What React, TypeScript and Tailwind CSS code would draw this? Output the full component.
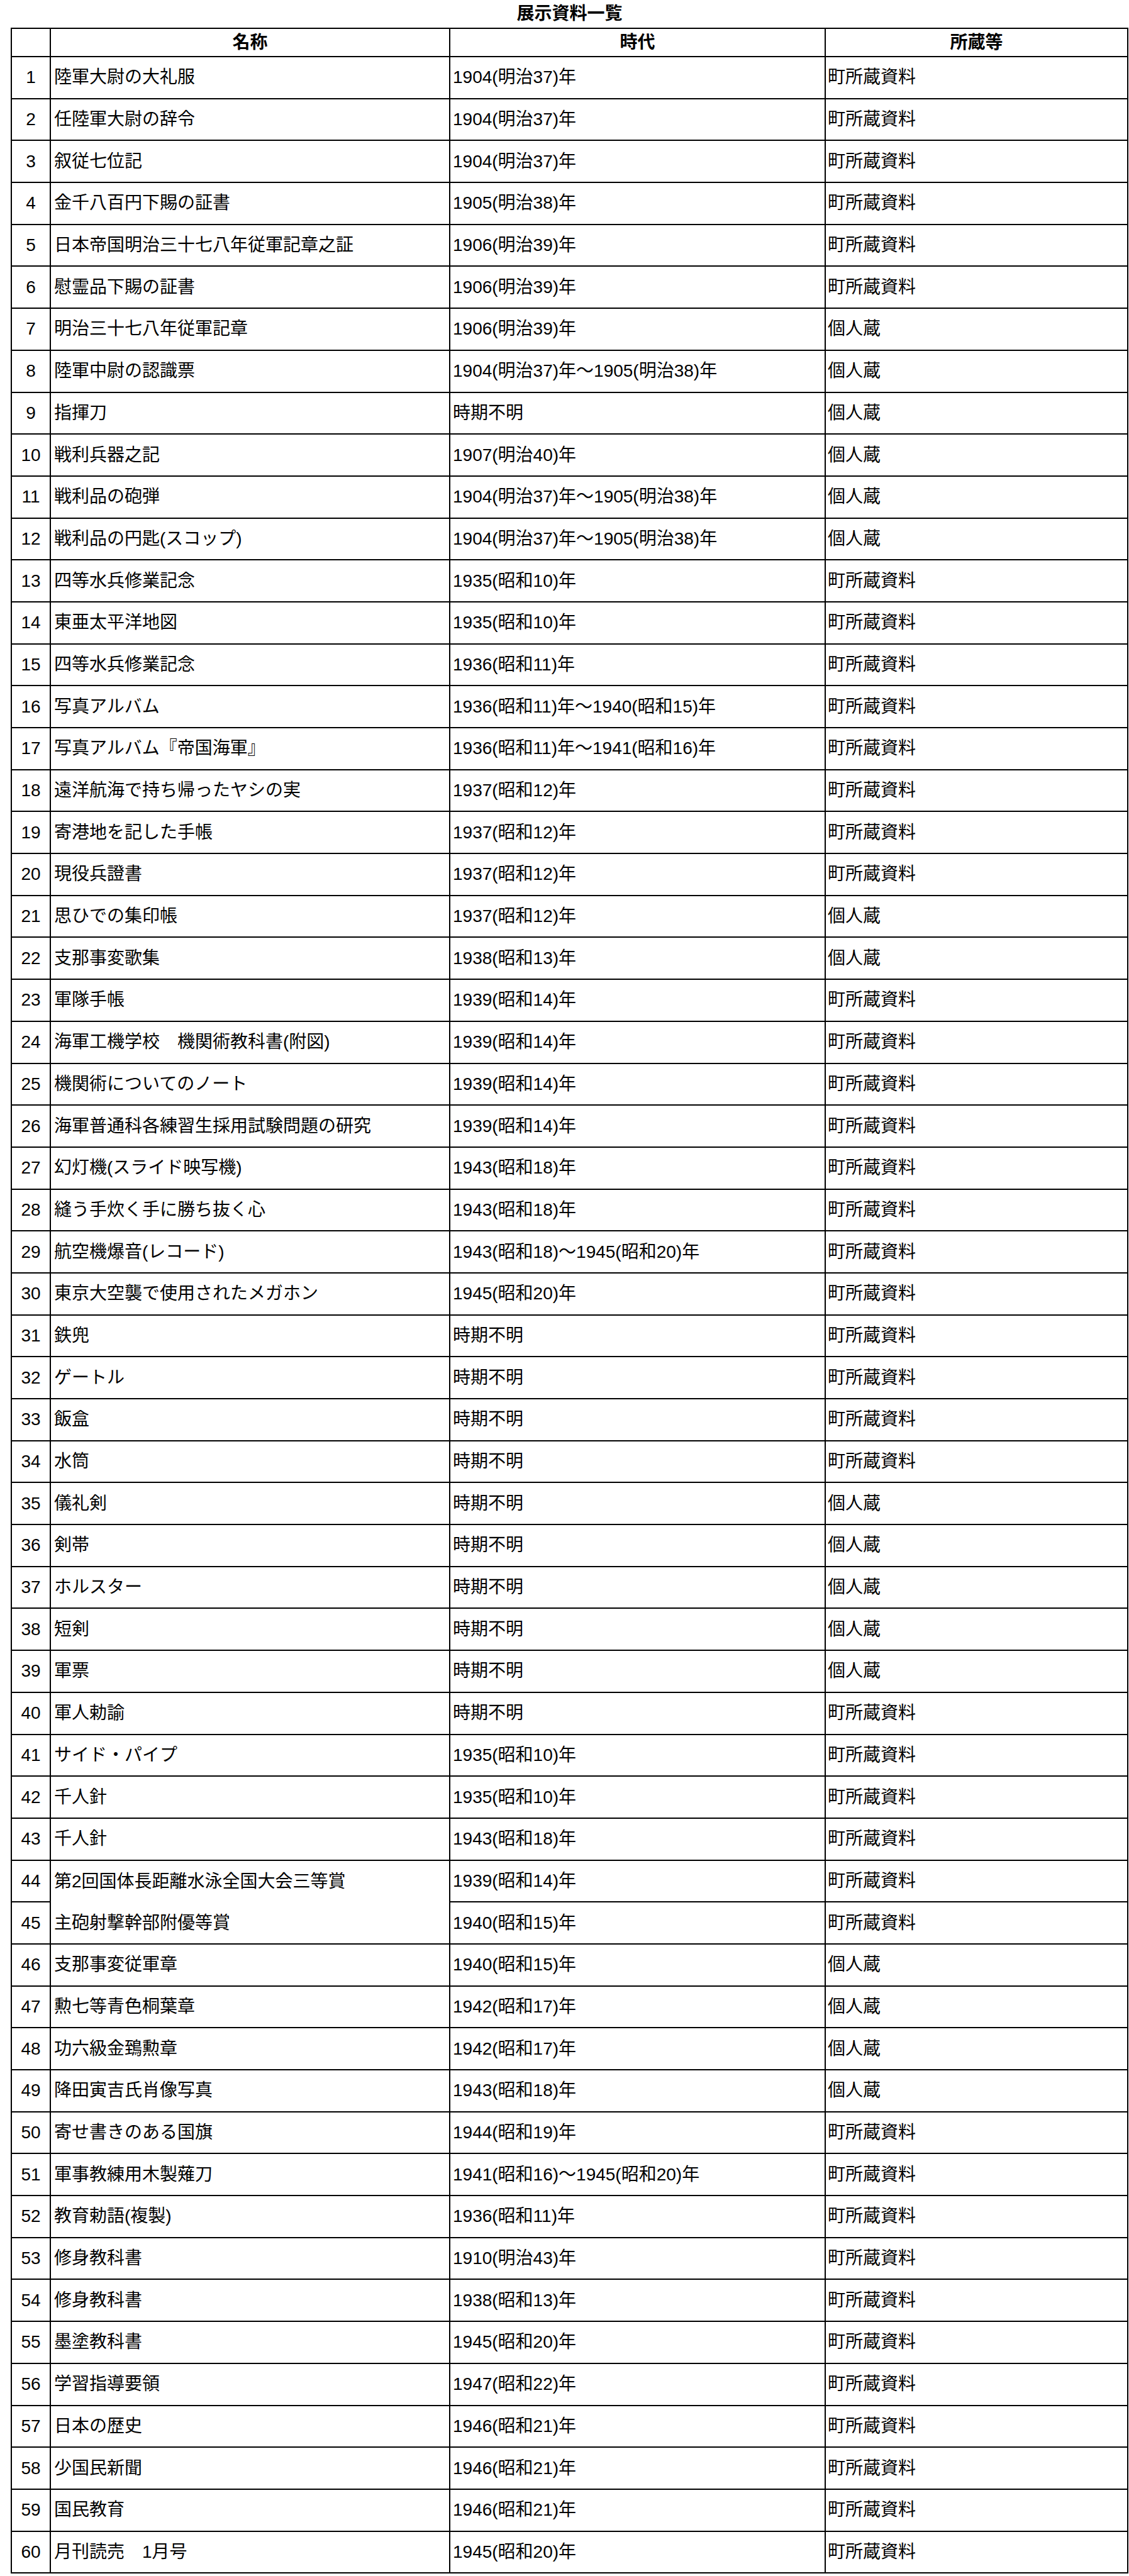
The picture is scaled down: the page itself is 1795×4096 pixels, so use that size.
import React from 'react';

interface Item {
  no: number;
  name: string;
  period: string;
  owner: string;
}

const TOWN = '町所蔵資料';
const PRIVATE = '個人蔵';

// 展示資料の一覧データ
const items: Item[] = [
  { no: 1, name: '陸軍大尉の大礼服', period: '1904(明治37)年', owner: TOWN },
  { no: 2, name: '任陸軍大尉の辞令', period: '1904(明治37)年', owner: TOWN },
  { no: 3, name: '叙従七位記', period: '1904(明治37)年', owner: TOWN },
  { no: 4, name: '金千八百円下賜の証書', period: '1905(明治38)年', owner: TOWN },
  { no: 5, name: '日本帝国明治三十七八年従軍記章之証', period: '1906(明治39)年', owner: TOWN },
  { no: 6, name: '慰霊品下賜の証書', period: '1906(明治39)年', owner: TOWN },
  { no: 7, name: '明治三十七八年従軍記章', period: '1906(明治39)年', owner: PRIVATE },
  { no: 8, name: '陸軍中尉の認識票', period: '1904(明治37)年～1905(明治38)年', owner: PRIVATE },
  { no: 9, name: '指揮刀', period: '時期不明', owner: PRIVATE },
  { no: 10, name: '戦利兵器之記', period: '1907(明治40)年', owner: PRIVATE },
  { no: 11, name: '戦利品の砲弾', period: '1904(明治37)年～1905(明治38)年', owner: PRIVATE },
  { no: 12, name: '戦利品の円匙(スコップ)', period: '1904(明治37)年～1905(明治38)年', owner: PRIVATE },
  { no: 13, name: '四等水兵修業記念', period: '1935(昭和10)年', owner: TOWN },
  { no: 14, name: '東亜太平洋地図', period: '1935(昭和10)年', owner: TOWN },
  { no: 15, name: '四等水兵修業記念', period: '1936(昭和11)年', owner: TOWN },
  { no: 16, name: '写真アルバム', period: '1936(昭和11)年～1940(昭和15)年', owner: TOWN },
  { no: 17, name: '写真アルバム『帝国海軍』', period: '1936(昭和11)年～1941(昭和16)年', owner: TOWN },
  { no: 18, name: '遠洋航海で持ち帰ったヤシの実', period: '1937(昭和12)年', owner: TOWN },
  { no: 19, name: '寄港地を記した手帳', period: '1937(昭和12)年', owner: TOWN },
  { no: 20, name: '現役兵證書', period: '1937(昭和12)年', owner: TOWN },
  { no: 21, name: '思ひでの集印帳', period: '1937(昭和12)年', owner: PRIVATE },
  { no: 22, name: '支那事変歌集', period: '1938(昭和13)年', owner: PRIVATE },
  { no: 23, name: '軍隊手帳', period: '1939(昭和14)年', owner: TOWN },
  { no: 24, name: '海軍工機学校\u3000機関術教科書(附図)', period: '1939(昭和14)年', owner: TOWN },
  { no: 25, name: '機関術についてのノート', period: '1939(昭和14)年', owner: TOWN },
  { no: 26, name: '海軍普通科各練習生採用試験問題の研究', period: '1939(昭和14)年', owner: TOWN },
  { no: 27, name: '幻灯機(スライド映写機)', period: '1943(昭和18)年', owner: TOWN },
  { no: 28, name: '縫う手炊く手に勝ち抜く心', period: '1943(昭和18)年', owner: TOWN },
  { no: 29, name: '航空機爆音(レコード)', period: '1943(昭和18)～1945(昭和20)年', owner: TOWN },
  { no: 30, name: '東京大空襲で使用されたメガホン', period: '1945(昭和20)年', owner: TOWN },
  { no: 31, name: '鉄兜', period: '時期不明', owner: TOWN },
  { no: 32, name: 'ゲートル', period: '時期不明', owner: TOWN },
  { no: 33, name: '飯盒', period: '時期不明', owner: TOWN },
  { no: 34, name: '水筒', period: '時期不明', owner: TOWN },
  { no: 35, name: '儀礼剣', period: '時期不明', owner: PRIVATE },
  { no: 36, name: '剣帯', period: '時期不明', owner: PRIVATE },
  { no: 37, name: 'ホルスター', period: '時期不明', owner: PRIVATE },
  { no: 38, name: '短剣', period: '時期不明', owner: PRIVATE },
  { no: 39, name: '軍票', period: '時期不明', owner: PRIVATE },
  { no: 40, name: '軍人勅諭', period: '時期不明', owner: TOWN },
  { no: 41, name: 'サイド・パイプ', period: '1935(昭和10)年', owner: TOWN },
  { no: 42, name: '千人針', period: '1935(昭和10)年', owner: TOWN },
  { no: 43, name: '千人針', period: '1943(昭和18)年', owner: TOWN },
  { no: 44, name: '第2回国体長距離水泳全国大会三等賞', period: '1939(昭和14)年', owner: TOWN },
  { no: 45, name: '主砲射撃幹部附優等賞', period: '1940(昭和15)年', owner: TOWN },
  { no: 46, name: '支那事変従軍章', period: '1940(昭和15)年', owner: PRIVATE },
  { no: 47, name: '勲七等青色桐葉章', period: '1942(昭和17)年', owner: PRIVATE },
  { no: 48, name: '功六級金鵄勲章', period: '1942(昭和17)年', owner: PRIVATE },
  { no: 49, name: '降田寅吉氏肖像写真', period: '1943(昭和18)年', owner: PRIVATE },
  { no: 50, name: '寄せ書きのある国旗', period: '1944(昭和19)年', owner: TOWN },
  { no: 51, name: '軍事教練用木製薙刀', period: '1941(昭和16)～1945(昭和20)年', owner: TOWN },
  { no: 52, name: '教育勅語(複製)', period: '1936(昭和11)年', owner: TOWN },
  { no: 53, name: '修身教科書', period: '1910(明治43)年', owner: TOWN },
  { no: 54, name: '修身教科書', period: '1938(昭和13)年', owner: TOWN },
  { no: 55, name: '墨塗教科書', period: '1945(昭和20)年', owner: TOWN },
  { no: 56, name: '学習指導要領', period: '1947(昭和22)年', owner: TOWN },
  { no: 57, name: '日本の歴史', period: '1946(昭和21)年', owner: TOWN },
  { no: 58, name: '少国民新聞', period: '1946(昭和21)年', owner: TOWN },
  { no: 59, name: '国民教育', period: '1946(昭和21)年', owner: TOWN },
  { no: 60, name: '月刊読売\u30001月号', period: '1945(昭和20)年', owner: TOWN },
];

// 名称セルが下の行と結合している行
const mergedWithNext = new Set([44]);

const cols = 'grid grid-cols-[62px_635px_597px_481px]';
const cell = 'flex items-center border-r-2 border-b-2 border-black';

const Row: React.FC<{ item: Item }> = ({ item }) => {
  const merged = mergedWithNext.has(item.no);
  return (
    <div className={`${cols} h-[66.7px]`}>
      <div className={`${cell} justify-center`}>{item.no}</div>
      <div className={`flex items-center border-r-2 border-black pl-[5px] whitespace-nowrap ${merged ? '' : 'border-b-2'}`}>
        {item.name}
      </div>
      <div className={`${cell} pl-[4px] whitespace-nowrap`}>{item.period}</div>
      <div className={`${cell} pl-[3px] whitespace-nowrap`}>{item.owner}</div>
    </div>
  );
};

const App: React.FC = () => {
  return (
    <div
      className="bg-white text-black text-[28px] leading-none pl-[17px] w-[1795px]"
      style={{ fontFamily: '"Liberation Sans", "Noto Sans CJK JP", sans-serif' }}
    >
      <div className="w-[1777px]">
        {/* タイトル */}
        <div className="h-[44px] flex items-center justify-center font-bold">展示資料一覧</div>

        {/* 一覧表 */}
        <div className="border-t-2 border-l-2 border-black">
          <div className={`${cols} h-[45px] font-bold`}>
            <div className={cell}></div>
            <div className={`${cell} justify-center`}>名称</div>
            <div className={`${cell} justify-center`}>時代</div>
            <div className={`${cell} justify-center`}>所蔵等</div>
          </div>
          {items.map(item => (
            <Row key={item.no} item={item} />
          ))}
        </div>
      </div>
    </div>
  );
};

export default App;
